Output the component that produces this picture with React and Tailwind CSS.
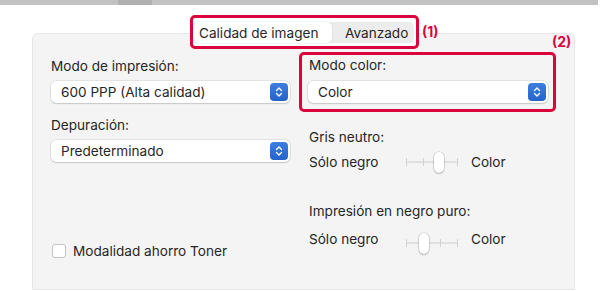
import React from 'react';

const Chevrons = () => (
  <svg width="8" height="12" viewBox="0 0 8 12" fill="none">
    <path d="M1.5 4.5L4 2L6.5 4.5" stroke="white" strokeWidth="1.4" strokeLinecap="round" strokeLinejoin="round" />
    <path d="M1.5 7.5L4 10L6.5 7.5" stroke="white" strokeWidth="1.4" strokeLinecap="round" strokeLinejoin="round" />
  </svg>
);

const Select = ({ value, className = '' }) => (
  <div className={`h-[22px] flex items-center justify-between bg-white rounded-[5px] shadow-[0_0_0_0.5px_rgba(0,0,0,0.14),0_1px_1.5px_rgba(0,0,0,0.12)] pl-[10px] pr-[2px] ${className}`}>
    <span>{value}</span>
    <div className="w-[18px] h-[18px] rounded-[4px] bg-gradient-to-b from-[#3d7fe0] to-[#2563c9] flex items-center justify-center">
      <Chevrons />
    </div>
  </div>
);

const Slider = ({ pos }) => (
  <div className="relative w-[52px] h-[16px]">
    <div className="absolute left-0 right-0 top-[7px] h-[2px] bg-[#e0e0e0]" />
    {[0, 17, 34, 51].map((x) => (
      <div key={x} className="absolute top-[4px] w-[1px] h-[8px] bg-[#d2d2d2]" style={{ left: x }} />
    ))}
    <div
      className="absolute top-[-2px] w-[10px] h-[21px] rounded-full bg-white shadow-[0_0_0_0.5px_rgba(0,0,0,0.2),0_1px_2px_rgba(0,0,0,0.18)]"
      style={{ left: pos - 5 }}
    />
  </div>
);

const SliderRow = ({ pos, nudge = '' }) => (
  <div className="flex items-center h-[16px]">
    <span className="w-[97px]">Sólo negro</span>
    <div className={nudge}>
      <Slider pos={pos} />
    </div>
    <span className="ml-[13px]">Color</span>
  </div>
);

export default function App() {
  return (
    <div className="w-[602px] h-[291px] bg-white overflow-hidden text-[13.6px] leading-[16px] text-[#262626] font-['Inter','Liberation_Sans',sans-serif]">
      {/* window title strip */}
      <div className="h-[5px] mr-[4px] bg-[#c2c2c2] flex">
        <div className="ml-[118px] w-[34px] bg-[#b0b0b0]" />
      </div>

      <div className="ml-[32px] w-[543px] mt-[10px]">
        {/* tabs */}
        <div className="relative z-10 flex items-start h-[34px] pl-[158px]">
          <div className="w-[229px] h-[34px] border-[3px] border-[#d8063c] rounded-[5px] bg-white pt-[4px]">
            <div className="flex h-[21px] w-[221px] bg-[#ececec] rounded-[5px]">
              <div className="w-[139px] bg-white rounded-[5px] shadow-[0_0_0_0.5px_rgba(0,0,0,0.08)] flex items-center pl-[6px]">
                Calidad de imagen
              </div>
              <div className="flex-1 flex items-center pl-[13px]">Avanzado</div>
            </div>
          </div>
          <span className="ml-[3px] mt-[9px] text-[14px] font-bold text-[#d8063c]">(1)</span>
        </div>

        {/* panel */}
        <div className="relative -mt-[16px] h-[257px] bg-[#f4f4f4] border border-[#e7e7e7] rounded-t-[6px] pl-[18px] pt-[18px] flex">
          <span className="absolute left-[519px] top-[0px] text-[14px] font-bold text-[#d8063c]">(2)</span>

          {/* left column */}
          <div className="w-[239px] flex flex-col">
            <div className="mt-[6px] h-[16px]">Modo de impresión:</div>
            <Select value="600 PPP (Alta calidad)" className="mt-[7px]" />
            <div className="mt-[14px] h-[16px]">Depuración:</div>
            <Select value="Predeterminado" className="mt-[7px]" />
            <div className="mt-[81px] h-[16px] flex items-center">
              <div className="w-[14px] h-[14px] ml-[1px] rounded-[3px] bg-white border border-[#c4c4c4]" />
              <span className="ml-[7px]">Modalidad ahorro Toner</span>
            </div>
          </div>

          {/* right column */}
          <div className="ml-[9px] w-[257px] flex flex-col">
            <div className="h-[60px] border-[3px] border-[#d8063c] rounded-[5px] pt-[1px] pl-[6px] pr-[5px]">
              <div className="h-[16px] ml-[1px] mt-[1px]">Modo color:</div>
              <Select value="Color" className="mt-[8px]" />
            </div>
            <div className="pl-[10px]">
              <div className="mt-[17px] h-[16px]">Gris neutro:</div>
              <div className="mt-[9px]">
                <SliderRow pos={33} />
              </div>
              <div className="mt-[33px] h-[16px]">Impresión en negro puro:</div>
              <div className="mt-[12px]">
                <SliderRow pos={18} nudge="mt-[8px]" />
              </div>
            </div>
          </div>
        </div>
      </div>
    </div>
  );
}
